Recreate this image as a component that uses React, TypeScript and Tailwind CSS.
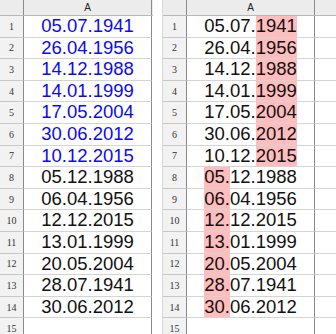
const LEFT: { v: string; blue: boolean }[] = [
  { v: "05.07.1941", blue: true },
  { v: "26.04.1956", blue: true },
  { v: "14.12.1988", blue: true },
  { v: "14.01.1999", blue: true },
  { v: "17.05.2004", blue: true },
  { v: "30.06.2012", blue: true },
  { v: "10.12.2015", blue: true },
  { v: "05.12.1988", blue: false },
  { v: "06.04.1956", blue: false },
  { v: "12.12.2015", blue: false },
  { v: "13.01.1999", blue: false },
  { v: "20.05.2004", blue: false },
  { v: "28.07.1941", blue: false },
  { v: "30.06.2012", blue: false },
];

const RIGHT: string[] = [
  "05.07.1941",
  "26.04.1956",
  "14.12.1988",
  "14.01.1999",
  "17.05.2004",
  "30.06.2012",
  "10.12.2015",
  "05.12.1988",
  "06.04.1956",
  "12.12.2015",
  "13.01.1999",
  "20.05.2004",
  "28.07.1941",
  "30.06.2012",
];

const rowNum =
  "flex w-[24px] shrink-0 items-center justify-center border-r border-r-[#8a8a8a] bg-[#f2f2f2] text-[10px] text-[#333] [font-family:'Liberation_Serif',serif]";

function HeaderRow({ withB }: { withB?: boolean }) {
  return (
    <div className="flex h-[16px] shrink-0 border-b border-b-[#b8b8b8] bg-[#ececec]">
      <div className="w-[24px] shrink-0 border-r border-r-[#8a8a8a]" />
      <div className="flex w-[128px] shrink-0 items-center justify-center border-r border-r-[#8a8a8a] text-[10px] text-[#222] [font-family:'Liberation_Sans',sans-serif]">
        A
      </div>
      {withB && <div className="flex-1" />}
    </div>
  );
}

function Row({
  n,
  children,
  withB,
}: {
  n: number;
  children?: React.ReactNode;
  withB?: boolean;
}) {
  return (
    <div className="flex h-[21.6px] shrink-0">
      <div className={`${rowNum} border-b border-b-[#c8c8c8]`}>{n}</div>
      <div className="flex w-[128px] shrink-0 items-stretch justify-center border-r border-r-[#8a8a8a] border-b border-b-[#d4d4d4] text-[18.5px] leading-none [font-family:'Liberation_Sans',Arial,sans-serif]">
        {children}
      </div>
      {withB && <div className="flex-1 border-b border-b-[#d4d4d4]" />}
    </div>
  );
}

function Hl({ children, on }: { children: string; on: boolean }) {
  return (
    <span className={`flex items-center ${on ? "bg-[#ffbdbd]" : ""}`}>
      {children}
    </span>
  );
}

export default function App() {
  return (
    <div className="flex h-[334px] w-[336px] overflow-hidden bg-white">
      <div className="flex w-[153px] shrink-0 flex-col">
        <HeaderRow />
        {LEFT.map((r, i) => (
          <Row key={i} n={i + 1}>
            <span
              className={`flex items-center ${r.blue ? "text-[#0a0af5]" : "text-[#111]"}`}
            >
              {r.v}
            </span>
          </Row>
        ))}
        <Row n={15} />
      </div>

      <div className="w-[9px] shrink-0" />

      <div className="flex flex-1 flex-col border-l border-l-[#d8d8d8]">
        <HeaderRow withB />
        {RIGHT.map((v, i) => {
          const early = i < 7;
          return (
            <Row key={i} n={i + 1} withB>
              <span className="flex text-[#111]">
                {early ? (
                  <>
                    <Hl on={false}>{v.slice(0, 6)}</Hl>
                    <Hl on>{v.slice(6)}</Hl>
                  </>
                ) : (
                  <>
                    <Hl on>{v.slice(0, 3)}</Hl>
                    <Hl on={false}>{v.slice(3)}</Hl>
                  </>
                )}
              </span>
            </Row>
          );
        })}
        <Row n={15} withB />
      </div>
    </div>
  );
}
